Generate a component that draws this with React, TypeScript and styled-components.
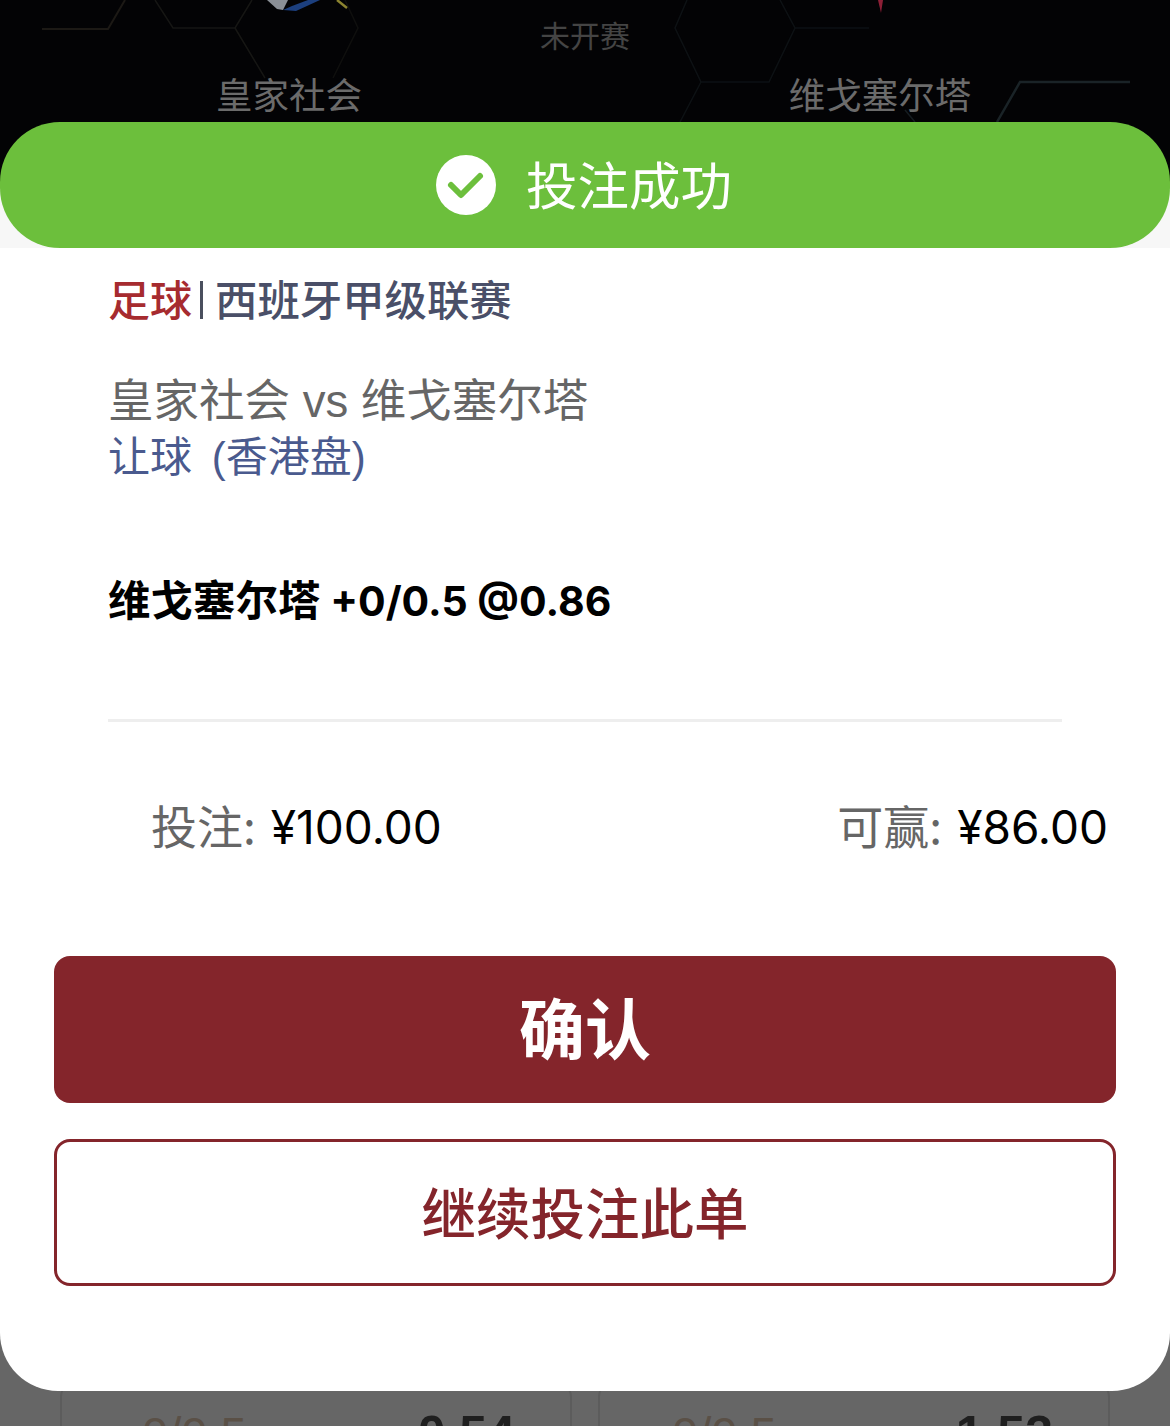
import styled, { createGlobalStyle } from 'styled-components';

const cjk = `"Noto Sans CJK SC", sans-serif`;
const latin = `"Liberation Sans", "Noto Sans CJK SC", sans-serif`;

const GlobalStyle = createGlobalStyle`
  html, body {
    margin: 0;
    padding: 0;
    background: #666666;
  }
  * {
    box-sizing: border-box;
  }
`;

export default function App() {
  return (
    <>
      <GlobalStyle />
      <Page>
        <Hero>
          <HeroArt viewBox="0 0 1170 122" aria-hidden="true">
            <g fill="none" strokeWidth="1.5">
              <path d="M42 29H108L125 0" stroke="#1c1915" strokeWidth="2" />
              <path d="M155 0L173 28H235L252 0M235 28L265 78" stroke="#161614" />
              <path d="M345 0L358 28L333 78" stroke="#0f0f0e" />
              <path d="M687 0L675 28L701 82H769L795 28L780 0M701 82L680 122M795 28H869" stroke="#0d1114" />
              <path d="M1130 82H1020L997 122" stroke="#1a2327" strokeWidth="2.5" />
              <path d="M905 110L915 122" stroke="#151c20" />
            </g>
            <path d="M267 0L277 9L283 10L288 0Z" fill="#8a8f96" />
            <path d="M283 10L296 11L320 0H308L292 6Z" fill="#1c3f7e" />
            <path d="M337 0L347 8" stroke="#8c8430" strokeWidth="2.5" fill="none" />
            <path d="M878 0H883L881 13Z" fill="#8c1f36" />
          </HeroArt>
          <Team>皇家社会</Team>
          <Status>未开赛</Status>
          <Team>维戈塞尔塔</Team>
        </Hero>

        <Sheet>
          <BannerBack>
            <Banner>
              <BannerIcon viewBox="0 0 60 60" aria-hidden="true">
                <circle cx="30" cy="30" r="30" fill="#ffffff" />
                <path
                  d="M15 30L25 40L44 21"
                  fill="none"
                  stroke="#6cbf3c"
                  strokeWidth="6"
                  strokeLinecap="round"
                  strokeLinejoin="round"
                />
              </BannerIcon>
              <BannerText>投注成功</BannerText>
            </Banner>
          </BannerBack>

          <Details>
            <League>
              <Sport>足球</Sport>
              <Pipe />
              <LeagueName>西班牙甲级联赛</LeagueName>
            </League>
            <Match>皇家社会 vs 维戈塞尔塔</Match>
            <Market>让球 (香港盘)</Market>
            <Selection>
              维戈塞尔塔 <Pick>+0/0.5 @0.86</Pick>
            </Selection>
          </Details>

          <Divider />

          <Amounts>
            <Amount>
              投注:<Money>¥100.00</Money>
            </Amount>
            <Amount>
              可赢:<Money>¥86.00</Money>
            </Amount>
          </Amounts>

          <Actions>
            <ConfirmButton>确认</ConfirmButton>
            <RepeatButton>继续投注此单</RepeatButton>
          </Actions>
        </Sheet>

        <OddsRow>
          <OddsCard $inset={80}>
            <Line>0/0.5</Line>
            <Price>0.54</Price>
          </OddsCard>
          <OddsCard $inset={72}>
            <Line>0/0.5</Line>
            <Price>1.53</Price>
          </OddsCard>
        </OddsRow>
      </Page>
    </>
  );
}

const Page = styled.div`
  width: 1170px;
  height: 1426px;
  display: flex;
  flex-direction: column;
  overflow: hidden;
  background: #666666;
`;

const Hero = styled.div`
  position: relative;
  height: 122px;
  flex-shrink: 0;
  display: grid;
  grid-template-columns: 578px 14px 576px;
  background: #030305;
  overflow: hidden;
`;
const HeroArt = styled.svg`
  position: absolute;
  left: 0;
  top: 0;
  width: 1170px;
  height: 122px;
`;
const Team = styled.div`
  position: relative;
  align-self: end;
  height: 54px;
  margin-bottom: 1px;
  font-family: ${cjk};
  font-size: 36.5px;
  line-height: 54px;
  color: #6b6b6b;
  text-align: center;
`;
const Status = styled.div`
  position: relative;
  justify-self: center;
  white-space: nowrap;
  padding-top: 12px;
  font-family: ${cjk};
  font-size: 30px;
  line-height: 44px;
  color: #444444;
`;

const Sheet = styled.div`
  position: relative;
  z-index: 1;
  height: 1269px;
  flex-shrink: 0;
  display: flex;
  flex-direction: column;
  background: #ffffff;
  border-radius: 0 0 58px 58px;
`;
const BannerBack = styled.div`
  background: linear-gradient(#030305 50%, #f7f7f7 50%);
`;
const Banner = styled.div`
  height: 126px;
  display: flex;
  align-items: center;
  justify-content: center;
  background: #6cbf3c;
  border-radius: 60px;
`;
const BannerIcon = styled.svg`
  width: 60px;
  height: 60px;
  margin-right: 30px;
`;
const BannerText = styled.span`
  padding: 0 2px 4px 0;
  font-family: ${cjk};
  font-size: 51.5px;
  line-height: 70px;
  color: #ffffff;
`;

const Details = styled.div`
  display: flex;
  flex-direction: column;
  padding: 23px 0 0 108px;
`;
const League = styled.div`
  display: flex;
  align-items: center;
  height: 52px;
`;
const Sport = styled.span`
  font-family: ${cjk};
  font-size: 42px;
  font-weight: 500;
  color: #a62b2f;
`;
const Pipe = styled.i`
  width: 3px;
  height: 38px;
  margin: 6px 12px 0 8px;
  background: #4a4f5e;
`;
const LeagueName = styled.span`
  font-family: ${cjk};
  font-size: 42.4px;
  font-weight: 500;
  color: #4a4f68;
`;
const Match = styled.div`
  margin-top: 51px;
  font-family: ${latin};
  font-size: 45.5px;
  line-height: 56px;
  color: #666666;
`;
const Market = styled.div`
  margin-top: 1px;
  font-family: ${latin};
  font-size: 42px;
  line-height: 54px;
  word-spacing: 8px;
  color: #4a5a8e;
`;
const Selection = styled.div`
  margin-top: 85px;
  font-family: ${cjk};
  font-size: 42.5px;
  font-weight: 700;
  line-height: 56px;
  color: #000000;
`;
const Pick = styled.span`
  font-family: Inter, sans-serif;
  font-size: 41px;
`;

const Divider = styled.div`
  width: 954px;
  height: 3px;
  margin: 90px 0 0 108px;
  background: #eeeeee;
`;

const Amounts = styled.div`
  display: flex;
  justify-content: space-between;
  margin-top: 74px;
  padding: 0 62px 0 151px;
`;
const Amount = styled.div`
  font-family: ${cjk};
  font-size: 46px;
  line-height: 56px;
  color: #666666;
  white-space: pre;
`;
const Money = styled.span`
  margin-left: 15px;
  font-family: Inter, sans-serif;
  font-size: 46px;
  color: #000000;
`;

const Actions = styled.div`
  display: flex;
  flex-direction: column;
  gap: 36px;
  margin: 101px 54px 0;
`;
const ConfirmButton = styled.button`
  height: 147px;
  padding: 0 0 10px;
  border: 0;
  border-radius: 16px;
  background: #84252b;
  font-family: ${cjk};
  font-size: 66px;
  font-weight: 700;
  color: #ffffff;
`;
const RepeatButton = styled.button`
  height: 147px;
  padding: 0 0 5px;
  border: 3px solid #84252b;
  border-radius: 16px;
  background: #ffffff;
  font-family: ${cjk};
  font-size: 54.5px;
  font-weight: 500;
  color: #84252b;
`;

const OddsRow = styled.div`
  display: flex;
  gap: 26px;
  margin-top: -10px;
  padding: 0 60px;
`;
const OddsCard = styled.div<{ $inset: number }>`
  width: 512px;
  height: 120px;
  flex-shrink: 0;
  display: flex;
  justify-content: space-between;
  padding: 26px 55px 0 ${p => p.$inset}px;
  border: 2px solid #5c5c5c;
  border-radius: 16px;
  font-family: ${latin};
  font-size: 47px;
  line-height: 50px;
`;
const Line = styled.span`
  color: #5a5046;
`;
const Price = styled.span`
  font-size: 50px;
  font-weight: 700;
  color: #1f1f1f;
`;
